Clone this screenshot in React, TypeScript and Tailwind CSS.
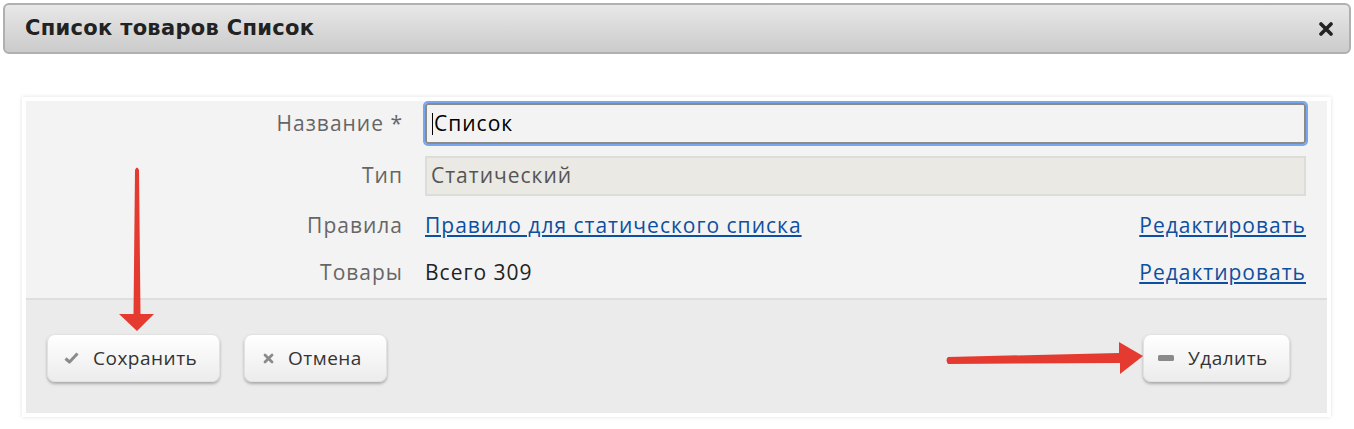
import React from 'react';

const font = { fontFamily: '"Open Sans", "Noto Sans", sans-serif' };

const Button: React.FC<{ icon: React.ReactNode; label: string; className?: string }> = ({ icon, label, className }) => (
  <button
    className={`h-[48px] flex items-center gap-[14px] rounded-[8px] border border-[#e2e2e2] bg-gradient-to-b from-white to-[#ececec] shadow-[0_2px_3px_rgba(0,0,0,0.28)] text-[19px] tracking-[0.5px] text-[#333] ${className ?? ''}`}
  >
    {icon}
    <span>{label}</span>
  </button>
);

const App: React.FC = () => {
  return (
    <div className="relative w-[1354px] h-[429px] bg-white overflow-hidden" style={font}>
      {/* Title bar */}
      <div className="mx-[3px] mt-[3px] h-[51px] flex items-center justify-between rounded-[6px] border-2 border-[#b0b0b0] bg-gradient-to-b from-[#e8e8e8] to-[#cbcbcb] pl-[20px] pr-[16px]">
        <h1 className="text-[21px] tracking-[0.3px] font-bold text-[#222]" style={{ fontFamily: '"DejaVu Sans", sans-serif' }}>
          Список товаров Список
        </h1>
        <svg width="14" height="14" viewBox="0 0 14 14">
          <path d="M2 2 L12 12 M12 2 L2 12" stroke="#222" strokeWidth="3.6" strokeLinecap="round" />
        </svg>
      </div>

      {/* Form panel */}
      <div className="mt-[43px] mx-[22px] w-[1309px] border-4 border-white shadow-[0_0_4px_rgba(0,0,0,0.12)]">
        <div className="bg-[#f3f3f3] pt-[2px] pb-[7px] pr-[21px] flex flex-col text-[21px] tracking-[1px]">
          <div className="flex items-center gap-[22px]">
            <label className="w-[377px] text-right text-[#666]">Название *</label>
            <div className="flex-1 h-[41px] rounded-[3px] border-2 border-[#8a8a8a] outline outline-2 outline-[#75a6ee] flex items-center pl-[5px] text-black">
              <span className="w-px h-[22px] bg-black mr-px" />
              Список
            </div>
          </div>
          <div className="flex items-center gap-[22px] mt-[12px]">
            <label className="w-[377px] text-right text-[#666]">Тип</label>
            <div className="flex-1 h-[40px] border-2 border-[#dcdcd8] bg-[#eae9e4] flex items-center pl-[4px] text-[#555]">
              Статический
            </div>
          </div>
          <div className="flex items-center gap-[22px] h-[36px] mt-[12px]">
            <label className="w-[377px] text-right text-[#666]">Правила</label>
            <a className="text-[#0d4fa0] underline underline-offset-2">Правило для статического списка</a>
            <a className="ml-auto text-[#0d4fa0] underline underline-offset-2">Редактировать</a>
          </div>
          <div className="flex items-center gap-[22px] h-[36px] mt-[11px]">
            <label className="w-[377px] text-right text-[#666]">Товары</label>
            <span className="text-[#222]">Всего 309</span>
            <a className="ml-auto text-[#0d4fa0] underline underline-offset-2">Редактировать</a>
          </div>
        </div>
        <div className="border-t-2 border-[#dedede] bg-[#ebebeb] h-[115px] flex items-start pt-[34px] pl-[21px] pr-[37px]">
          <Button
            className="w-[173px] pl-[16px]"
            label="Сохранить"
            icon={
              <svg width="15" height="12" viewBox="0 0 15 12">
                <path d="M1.5 6.5 L5.5 10 L13.5 1.5" fill="none" stroke="#8a8a8a" strokeWidth="3" strokeLinejoin="round" />
              </svg>
            }
          />
          <Button
            className="ml-[24px] w-[143px] pl-[18px]"
            label="Отмена"
            icon={
              <svg width="11" height="11" viewBox="0 0 11 11">
                <path d="M2 2 L9 9 M9 2 L2 9" stroke="#8a8a8a" strokeWidth="2.8" strokeLinecap="round" />
              </svg>
            }
          />
          <Button
            className="ml-auto w-[147px] pl-[14px]"
            label="Удалить"
            icon={
              <svg width="16" height="6" viewBox="0 0 16 6">
                <rect x="0" y="0" width="16" height="6" rx="1.5" fill="#8a8a8a" />
              </svg>
            }
          />
        </div>
      </div>

      {/* Annotation arrows */}
      <svg className="absolute left-0 top-0 pointer-events-none" width="1354" height="429">
        <g fill="#e53a2f">
          <path d="M135 170 Q137 165 139 170 L140.5 314 L154 314 L137 331 L119 314 L133.5 314 Z" />
          <path d="M948 357 L1119 353 L1119 342 L1143 356 L1120 374 L1120 363 L948 364 Q945 360 948 357 Z" />
        </g>
      </svg>
    </div>
  );
};

export default App;
